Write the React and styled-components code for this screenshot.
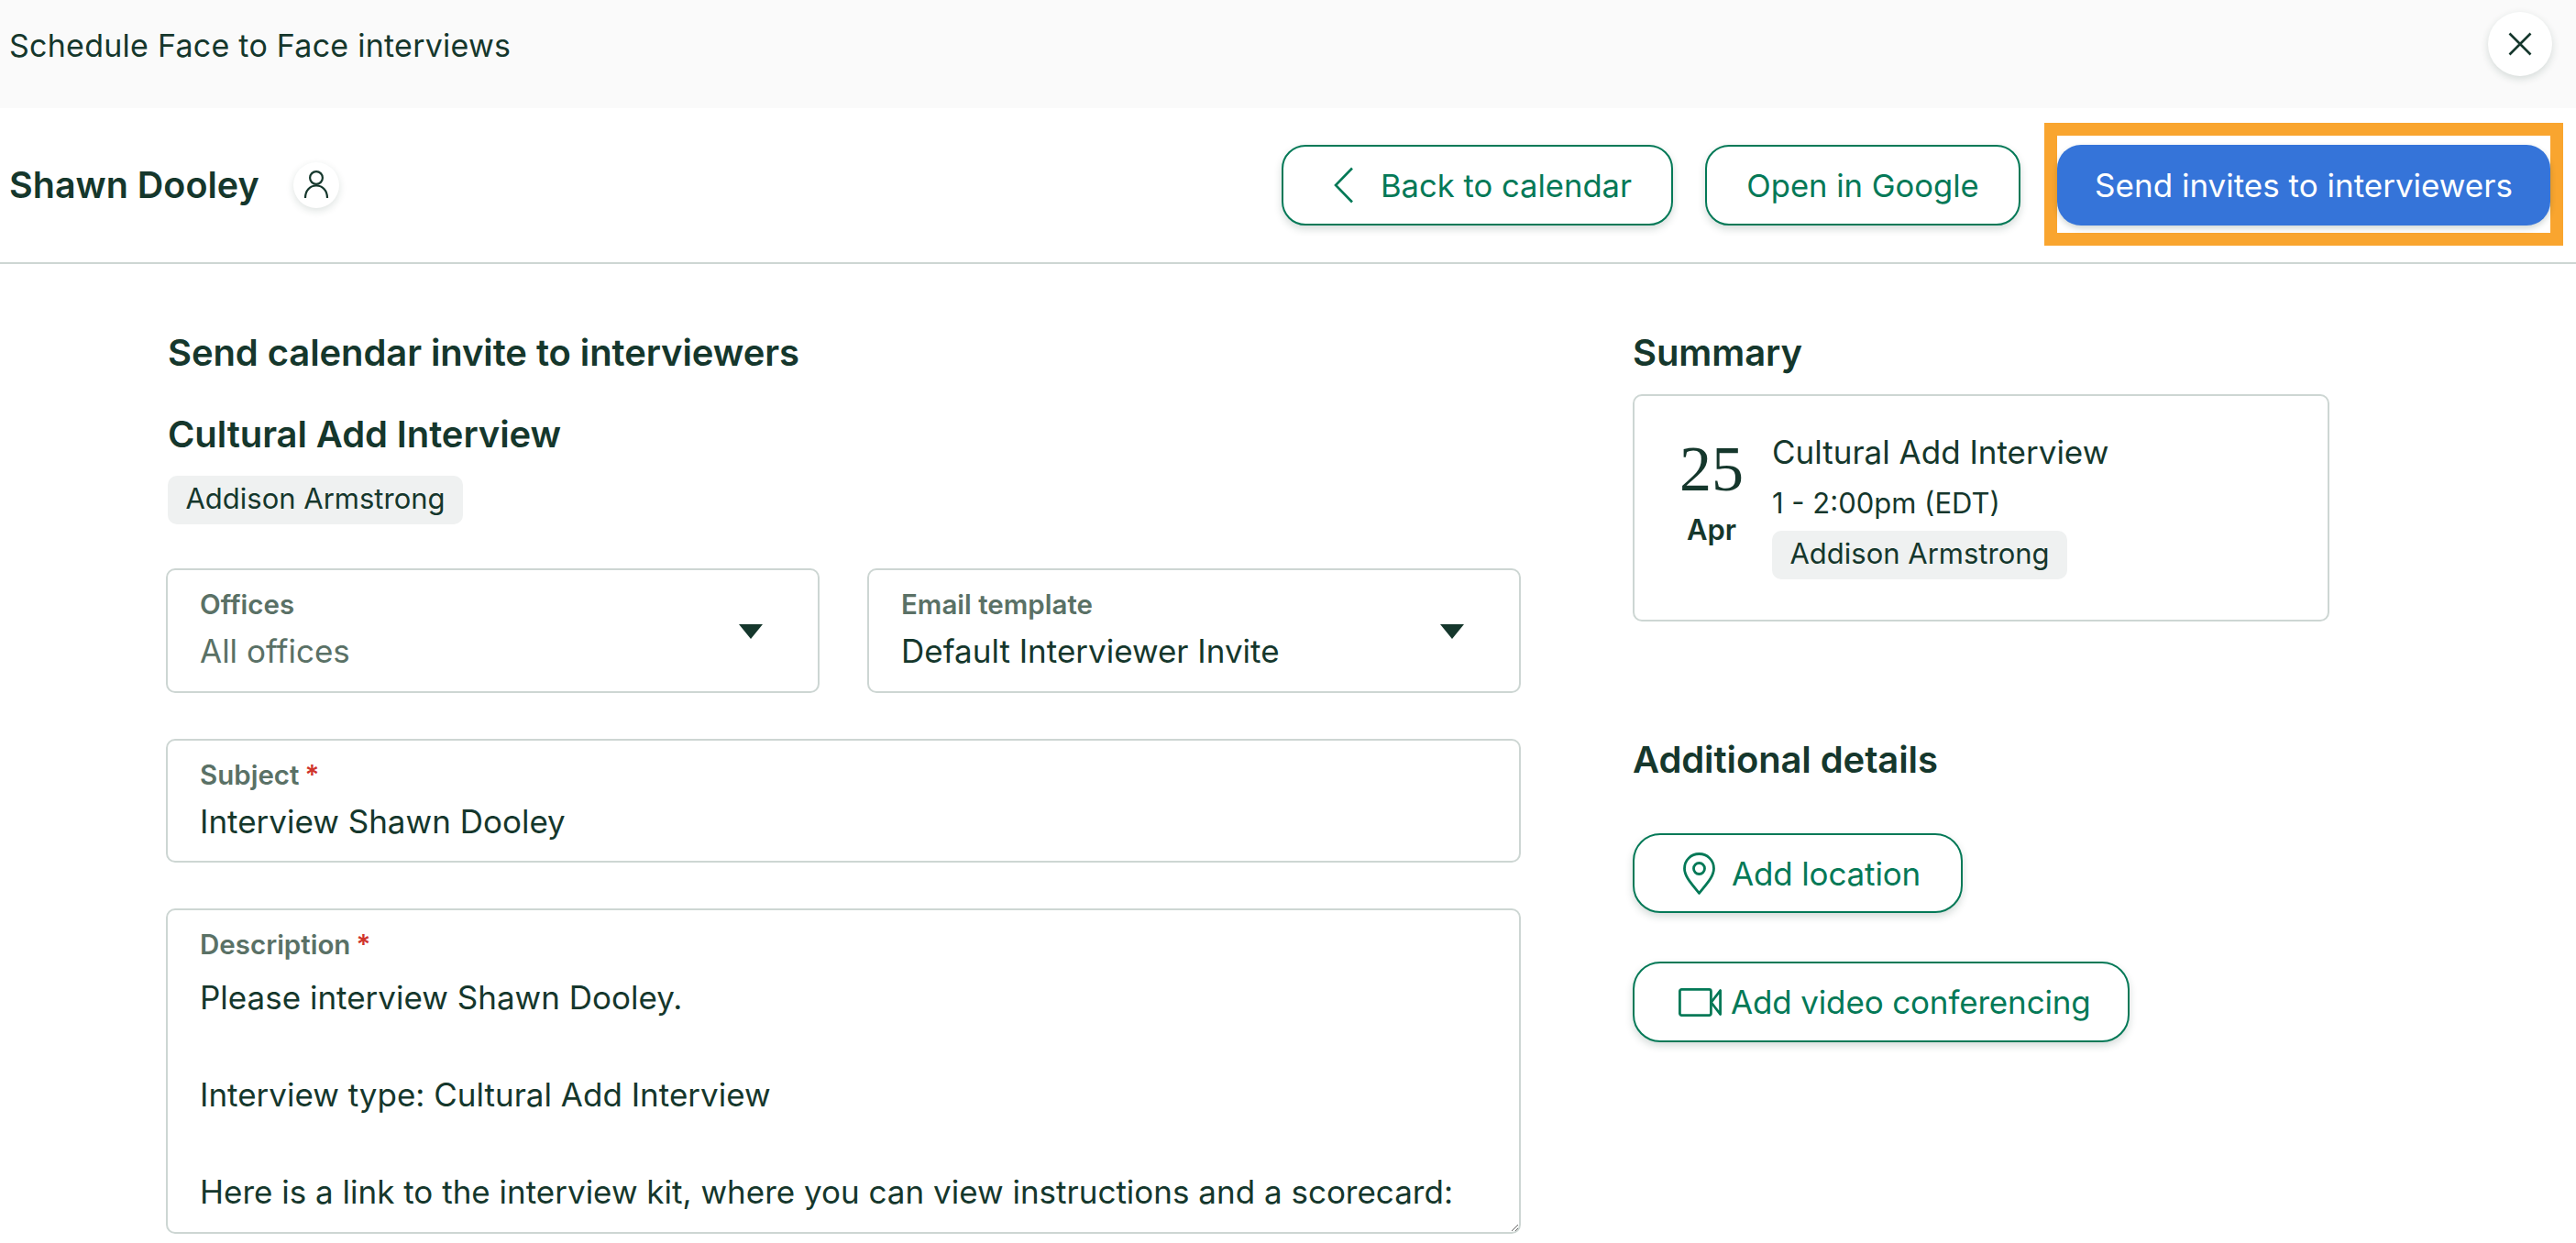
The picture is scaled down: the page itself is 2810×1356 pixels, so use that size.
import React from "react";
import styled, { createGlobalStyle } from "styled-components";

const GlobalStyle = createGlobalStyle`
  html, body { margin: 0; padding: 0; background: #fff; }
  body { font-family: Inter, "Liberation Sans", sans-serif; color: #15372c; }
  * { box-sizing: border-box; }
`;

const Page = styled.div`
  width: 2810px;
  height: 1356px;
  overflow: hidden;
  background: #fff;
`;

const TopBar = styled.div`
  height: 118px;
  background: #fafafa;
  display: flex;
  align-items: center;
  justify-content: space-between;
  padding: 0 26px 20px 10px;
  font-size: 34px;
  letter-spacing: 0.25px;
`;

const CloseBtn = styled.button`
  width: 70px;
  height: 70px;
  margin-top: -2px;
  border: 0;
  border-radius: 50%;
  background: #fff;
  box-shadow: 0 3px 8px rgba(21, 55, 44, 0.16);
  display: flex;
  align-items: center;
  justify-content: center;
  padding: 0;
`;

const HeaderRow = styled.div`
  height: 170px;
  border-bottom: 2px solid #cdd6d3;
  display: flex;
  align-items: center;
  padding: 0 14px 0 10px;
`;

const Name = styled.h1`
  margin: 0;
  font-size: 39.5px;
  font-weight: 600;
`;

const IconCircle = styled.div`
  width: 50px;
  height: 50px;
  margin-left: 37px;
  border-radius: 50%;
  background: #fff;
  box-shadow: 0 3px 8px rgba(21, 55, 44, 0.14);
  display: flex;
  align-items: center;
  justify-content: center;
`;

const Actions = styled.div`
  margin-left: auto;
  display: flex;
  align-items: center;
`;

const OutlineBtn = styled.button`
  height: ${(p) => p.$h || 88}px;
  width: ${(p) => p.$w}px;
  margin-right: ${(p) => p.$mr || 0}px;
  border: 2px solid #047957;
  border-radius: 26px;
  background: #fff;
  color: #047957;
  font-family: inherit;
  font-size: 34.6px;
  box-shadow: 0 4px 8px rgba(21, 55, 44, 0.18);
  display: flex;
  align-items: center;
  justify-content: ${(p) => (p.$pl ? "flex-start" : "center")};
  gap: ${(p) => p.$gap || 0}px;
  padding: 0 0 0 ${(p) => p.$pl || 0}px;
`;

const Highlight = styled.div`
  border: 14px solid #f9a52f;
  padding: 10px 0 8px;
  margin-left: 26px;
  margin-top: -3px;
`;

const PrimaryBtn = styled.button`
  display: block;
  width: 538px;
  height: 88px;
  border: 0;
  border-radius: 26px;
  background: #3574d9;
  color: #fff;
  font-family: inherit;
  font-size: 35px;
  box-shadow: 0 3px 6px rgba(21, 55, 44, 0.2);
  padding: 0;
`;

const Main = styled.div`
  display: grid;
  grid-template-columns: 1478px 760px;
  column-gap: 122px;
  padding: 0 0 0 181px;
`;

const LeftCol = styled.div`
  display: flex;
  flex-direction: column;
  padding-top: 72px;
`;

const RightCol = styled.div`
  display: flex;
  flex-direction: column;
  padding-top: 72px;
  align-items: flex-start;
`;

const SectionTitle = styled.h2`
  margin: 0;
  font-size: 40px;
  line-height: 50px;
  font-weight: 600;
  letter-spacing: -0.1px;
`;

const FormTitle = styled(SectionTitle)`
  margin-left: 2px;
`;

const InterviewTitle = styled(FormTitle)`
  margin-top: 39px;
`;

const Chip = styled.span`
  display: inline-flex;
  justify-content: center;
  width: 322px;
  height: 53px;
  padding-top: 6px;
  border-radius: 10px;
  background: #eff1f1;
  font-size: 31px;
  line-height: 38px;
`;

const ChipRow = styled.div`
  margin: 20px 0 48px 2px;
  display: flex;
`;

const FieldRow = styled.div`
  display: grid;
  grid-template-columns: 713px 713px;
  column-gap: 52px;
`;

const Field = styled.div`
  position: relative;
  height: ${(p) => p.$h || 136}px;
  margin-top: ${(p) => p.$mt || 0}px;
  border: 2px solid #cdd6d3;
  border-radius: 10px;
  background: #fff;
  padding: 19px 35px 0;
  display: flex;
  flex-direction: column;
`;

const Label = styled.label`
  font-size: 29.5px;
  line-height: 36px;
  font-weight: 600;
  color: #5a7166;
`;

const Required = styled.span`
  color: #d0352b;
  margin-left: 6px;
`;

const Value = styled.div`
  margin-top: 11px;
  font-size: 35px;
  line-height: 44px;
  color: ${(p) => (p.$muted ? "#5a7166" : "#15372c")};
`;

const Caret = styled.span`
  position: absolute;
  right: 60px;
  top: 59px;
  width: 0;
  height: 0;
  border-left: 13px solid transparent;
  border-right: 13px solid transparent;
  border-top: 16px solid #15372c;
`;

const TextBox = styled.textarea`
  flex: 1;
  margin: 14px -35px 0;
  padding: 0 35px;
  border: 0;
  outline: 0;
  background: transparent;
  border-radius: 0 0 8px 8px;
  font-family: inherit;
  font-size: 35px;
  line-height: 53px;
  color: #15372c;
  overflow: hidden;
  resize: vertical;
`;

const SummaryCard = styled.div`
  width: 760px;
  height: 248px;
  margin-top: 20px;
  border: 2px solid #cdd6d3;
  border-radius: 10px;
  padding: 38px 0 0 48px;
  display: flex;
  gap: 30px;
`;

const DateCol = styled.div`
  width: 72px;
  display: flex;
  flex-direction: column;
  align-items: center;
`;

const DayNum = styled.div`
  margin-top: 2px;
  font-family: "Liberation Serif", serif;
  font-size: 70px;
  line-height: 80px;
`;

const Month = styled.div`
  margin-top: 7px;
  font-size: 31px;
  line-height: 38px;
  font-weight: 600;
`;

const EventCol = styled.div`
  display: flex;
  flex-direction: column;
  align-items: flex-start;
`;

const EventName = styled.div`
  font-size: 35px;
  line-height: 46px;
`;

const EventTime = styled.div`
  margin-top: 13px;
  font-size: 31px;
  line-height: 40px;
`;

const EventChip = styled(Chip)`
  margin-top: 10px;
`;

const DetailsTitle = styled(SectionTitle)`
  margin-top: 126px;
`;

const DetailBtn = styled(OutlineBtn)`
  margin-top: ${(p) => p.$mt}px;
  border-radius: 30px;
  font-size: 35px;
  letter-spacing: -0.15px;
`;

function Cross() {
  return (
    <svg width="26" height="26" viewBox="0 0 26 26" fill="none" stroke="#15372c" strokeWidth="2.6">
      <path d="M1.5 1.5 L24.5 24.5 M24.5 1.5 L1.5 24.5" />
    </svg>
  );
}

function Person() {
  return (
    <svg width="28" height="32" viewBox="0 0 28 32" fill="none" stroke="#15372c" strokeWidth="2.2">
      <circle cx="14" cy="8" r="6.9" />
      <path d="M2 30 C2 22 7 16.5 14 16.5 C21 16.5 26 22 26 30" />
    </svg>
  );
}

function Chevron() {
  return (
    <svg width="21" height="40" viewBox="0 0 21 40" fill="none" stroke="#047957" strokeWidth="2.6">
      <path d="M20 1.5 L2 20 L20 38.5" />
    </svg>
  );
}

function Pin() {
  return (
    <svg width="35" height="46" viewBox="0 0 35 46" fill="none" stroke="#047957" strokeWidth="2.8" strokeLinejoin="round">
      <path d="M17.5 44.5 C11 36 1.5 27 1.5 17.5 C1.5 8.5 8.5 1.5 17.5 1.5 C26.5 1.5 33.5 8.5 33.5 17.5 C33.5 27 24 36 17.5 44.5 Z" />
      <circle cx="17.5" cy="17.5" r="6" />
    </svg>
  );
}

function Video() {
  return (
    <svg width="47" height="31" viewBox="0 0 47 31" fill="none" stroke="#047957" strokeWidth="2.8" strokeLinejoin="round">
      <rect x="1.4" y="1.4" width="34" height="28.2" rx="2" />
      <path d="M35.6 15.5 L45.6 2.5 V28.5 Z" />
    </svg>
  );
}

const description = `Please interview Shawn Dooley.

Interview type: Cultural Add Interview

Here is a link to the interview kit, where you can view instructions and a scorecard:`;

export default function App() {
  return (
    <Page>
      <GlobalStyle />
      <TopBar>
        <span>Schedule Face to Face interviews</span>
        <CloseBtn aria-label="Close"><Cross /></CloseBtn>
      </TopBar>
      <HeaderRow>
        <Name>Shawn Dooley</Name>
        <IconCircle><Person /></IconCircle>
        <Actions>
          <OutlineBtn $w={427} $mr={35} $pl={55} $gap={30}><Chevron />Back to calendar</OutlineBtn>
          <OutlineBtn $w={344}>Open in Google</OutlineBtn>
          <Highlight>
            <PrimaryBtn>Send invites to interviewers</PrimaryBtn>
          </Highlight>
        </Actions>
      </HeaderRow>
      <Main>
        <LeftCol>
          <FormTitle>Send calendar invite to interviewers</FormTitle>
          <InterviewTitle>Cultural Add Interview</InterviewTitle>
          <ChipRow><Chip>Addison Armstrong</Chip></ChipRow>
          <FieldRow>
            <Field>
              <Label>Offices</Label>
              <Value $muted>All offices</Value>
              <Caret />
            </Field>
            <Field>
              <Label>Email template</Label>
              <Value>Default Interviewer Invite</Value>
              <Caret />
            </Field>
          </FieldRow>
          <Field $mt={50} $h={135}>
            <Label>Subject<Required>*</Required></Label>
            <Value>Interview Shawn Dooley</Value>
          </Field>
          <Field $mt={50} $h={355}>
            <Label>Description<Required>*</Required></Label>
            <TextBox defaultValue={description} spellCheck={false} />
          </Field>
        </LeftCol>
        <RightCol>
          <SectionTitle>Summary</SectionTitle>
          <SummaryCard>
            <DateCol>
              <DayNum>25</DayNum>
              <Month>Apr</Month>
            </DateCol>
            <EventCol>
              <EventName>Cultural Add Interview</EventName>
              <EventTime>1 - 2:00pm (EDT)</EventTime>
              <EventChip>Addison Armstrong</EventChip>
            </EventCol>
          </SummaryCard>
          <DetailsTitle>Additional details</DetailsTitle>
          <DetailBtn $w={360} $h={87} $mt={55} $pl={53} $gap={18}><Pin />Add location</DetailBtn>
          <DetailBtn $w={542} $h={88} $mt={53} $pl={48} $gap={10}><Video />Add video conferencing</DetailBtn>
        </RightCol>
      </Main>
    </Page>
  );
}
